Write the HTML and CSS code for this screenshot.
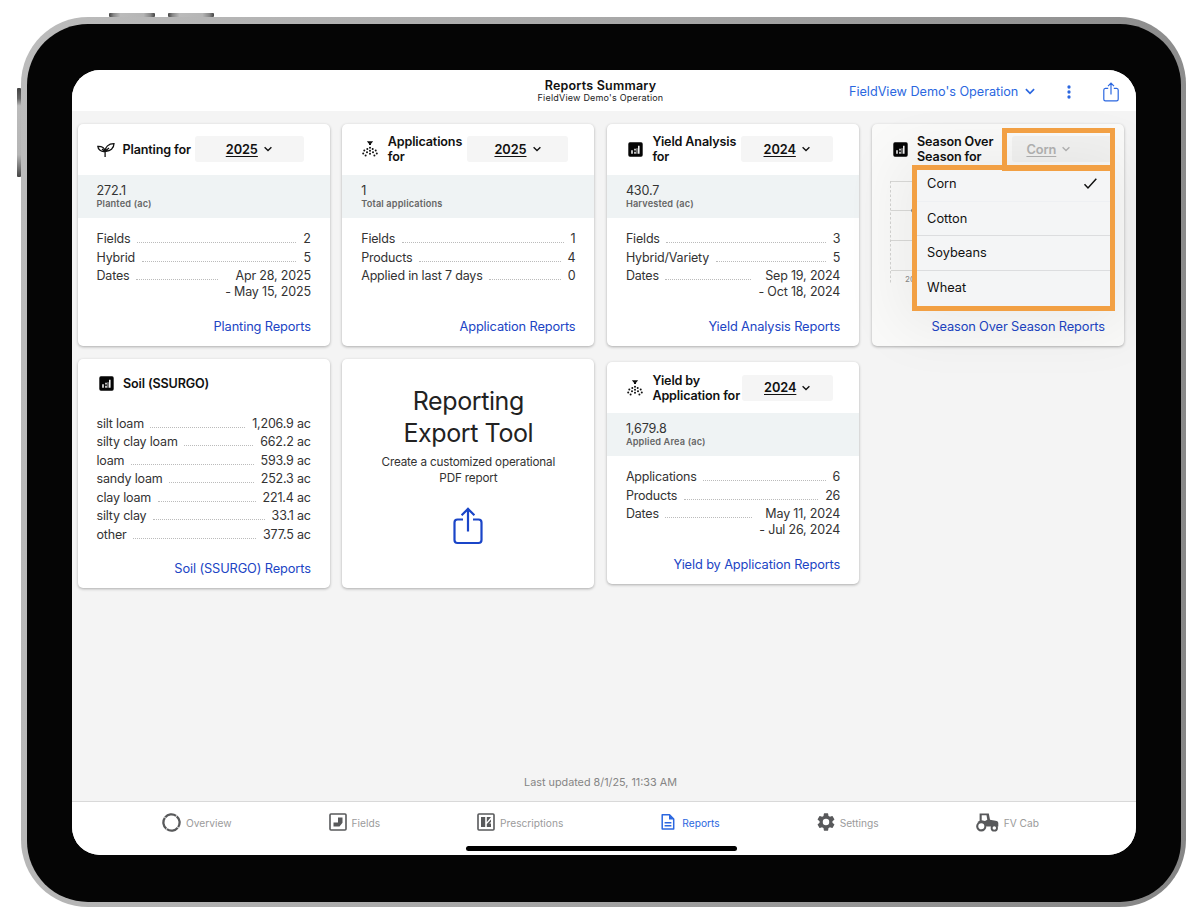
FILE: index.html
```
<!DOCTYPE html>
<html lang="en">
<head>
<meta charset="utf-8">
<title>Reports Summary</title>
<link rel="stylesheet" href="styles.css">
</head>
<body>
<svg class="defs" width="0" height="0" aria-hidden="true">
  <symbol id="chart" viewBox="0 0 15 15"><rect x=".3" y=".3" width="14.4" height="14.4" rx="1.6" fill="#050505"/><path d="M4 8.2v3.6M7 9.7v2.1M7 6.8v1.6M10.8 3.7v8.1" stroke="#fff" stroke-width="1.5"/><path d="M9 6.2v5.6" stroke="#fff" stroke-width=".8"/></symbol>
  <symbol id="spray" viewBox="0 0 16 16"><path d="M4.900.3h6.200L9.400 2.500H6.600zM7 2h2v1.900H7z" fill="#111"/><g fill="#111"><circle cx="8" cy="6.700" r="1"/><circle cx="5.300" cy="8" r="1"/><circle cx="10.700" cy="8" r="1"/><circle cx="8" cy="9.700" r="1"/><circle cx="2.300" cy="9.600" r="1"/><circle cx="13.700" cy="9.600" r="1"/><circle cx="5" cy="11.300" r="1"/><circle cx="11" cy="11.300" r="1"/><circle cx="8" cy="12.700" r="1"/><circle cx="1.200" cy="12.500" r="1"/><circle cx="14.800" cy="12.500" r="1"/><circle cx="3.600" cy="14.600" r="1"/><circle cx="12.400" cy="14.600" r="1"/></g></symbol>
  <symbol id="chev" viewBox="0 0 10 8"><path d="M1.6 2.3 5 5.6l3.4-3.3" fill="none" stroke="currentColor" stroke-width="1.35"/></symbol>
</svg>
<div class="device">
  <i class="key key-top key-a"></i><i class="key key-top key-b"></i><i class="key key-side"></i>
  <div class="bezel">
    <div class="screen">
      <header class="topbar">
        <div class="heading"><h1>Reports Summary</h1><p>FieldView Demo's Operation</p></div>
        <div class="tools">
          <span class="operation">FieldView Demo's Operation</span>
          <svg class="op-chev" width="12" height="9" viewBox="0 0 12 9"><path d="M1.9 2.2 6 6.3l4.1-4.1" fill="none" stroke="currentColor" stroke-width="1.7"/></svg>
          <svg class="more" width="6" height="14" viewBox="0 0 6 14" fill="currentColor"><circle cx="3" cy="2" r="1.65"/><circle cx="3" cy="7" r="1.65"/><circle cx="3" cy="12" r="1.65"/></svg>
          <svg class="share" width="16" height="20" viewBox="0 0 16 20" fill="none" stroke="currentColor" stroke-width="1.2"><path d="M5.2 6.3H2.4A1.7 1.7 0 0 0 .8 8v9.2a1.7 1.7 0 0 0 1.6 1.7h11.2a1.7 1.7 0 0 0 1.6-1.7V8a1.7 1.7 0 0 0-1.6-1.7h-2.8M8 12.5V1.3M5 4.2 8 1.2l3 3"/></svg>
        </div>
      </header>

      <main class="grid">
        <section class="card">
          <div class="card-head">
            <svg class="icon" width="18" height="16" viewBox="0 0 18 16" fill="none" stroke="#111" stroke-width="1.3"><path d="M8.100 15V9.200M8.100 9.200C8 5.200 11.500 1.500 17 1.600 17 6.300 13.300 9.700 8.100 9.200zM8.100 9.300 12 6M8.100 9.400C8 6 5 4.100.8 4.300 1 7.600 4 10.100 8.100 9.400zM7.900 9.300 5 7.100"/></svg>
            <h2>Planting for</h2>
            <span class="select w109"><u>2025</u><svg width="10" height="8"><use href="#chev"/></svg></span>
          </div>
          <div class="stat"><b>272.1</b><small>Planted (ac)</small></div>
          <dl>
            <div><dt>Fields</dt><i></i><dd>2</dd></div>
            <div><dt>Hybrid</dt><i></i><dd>5</dd></div>
            <div><dt>Dates</dt><i></i><dd>Apr 28, 2025<br>- May 15, 2025</dd></div>
          </dl>
          <a>Planting Reports</a>
        </section>

        <section class="card">
          <div class="card-head">
            <svg class="icon" width="16" height="16"><use href="#spray"/></svg>
            <h2>Applications<br>for</h2>
            <span class="select w101"><u>2025</u><svg width="10" height="8"><use href="#chev"/></svg></span>
          </div>
          <div class="stat"><b>1</b><small>Total applications</small></div>
          <dl>
            <div><dt>Fields</dt><i></i><dd>1</dd></div>
            <div><dt>Products</dt><i></i><dd>4</dd></div>
            <div><dt>Applied in last 7 days</dt><i></i><dd>0</dd></div>
          </dl>
          <a>Application Reports</a>
        </section>

        <section class="card">
          <div class="card-head">
            <svg class="icon" width="15" height="15"><use href="#chart"/></svg>
            <h2>Yield Analysis<br>for</h2>
            <span class="select w92"><u>2024</u><svg width="10" height="8"><use href="#chev"/></svg></span>
          </div>
          <div class="stat"><b>430.7</b><small>Harvested (ac)</small></div>
          <dl>
            <div><dt>Fields</dt><i></i><dd>3</dd></div>
            <div><dt>Hybrid/Variety</dt><i></i><dd>5</dd></div>
            <div><dt>Dates</dt><i></i><dd>Sep 19, 2024<br>- Oct 18, 2024</dd></div>
          </dl>
          <a>Yield Analysis Reports</a>
        </section>

        <section class="card season">
          <div class="card-head">
            <svg class="icon" width="15" height="15"><use href="#chart"/></svg>
            <h2>Season Over<br>Season for</h2>
            <span class="select muted"><u>Corn</u><svg width="10" height="8"><use href="#chev"/></svg></span>
          </div>
          <svg class="plot" width="60" height="110" viewBox="0 0 60 110"><path d="M1 6.500h59M1 35.500h59M1 65.500h59M1 95.500h59" stroke="#dadad8"/><path d="M.500 6v102" stroke="#d3d3d1" stroke-dasharray="2.500 2"/><circle cx="23" cy="35.500" r="2" fill="#888"/><text x="15" y="107">2022</text></svg>
          <a>Season Over Season Reports</a>
          <ul class="menu">
            <li>Corn<svg width="15" height="13" viewBox="0 0 15 13"><path d="M1.500 7.200 5 11 13.300 1.800" fill="none" stroke="#111" stroke-width="1.500"/></svg></li>
            <li>Cotton</li><li>Soybeans</li><li>Wheat</li>
          </ul>
          <div class="mark"></div>
        </section>

        <section class="card soil">
          <div class="card-head">
            <svg class="icon" width="15" height="15"><use href="#chart"/></svg>
            <h2>Soil (SSURGO)</h2>
          </div>
          <dl>
            <div><dt>silt loam</dt><i></i><dd>1,206.9 ac</dd></div>
            <div><dt>silty clay loam</dt><i></i><dd>662.2 ac</dd></div>
            <div><dt>loam</dt><i></i><dd>593.9 ac</dd></div>
            <div><dt>sandy loam</dt><i></i><dd>252.3 ac</dd></div>
            <div><dt>clay loam</dt><i></i><dd>221.4 ac</dd></div>
            <div><dt>silty clay</dt><i></i><dd>33.1 ac</dd></div>
            <div><dt>other</dt><i></i><dd>377.5 ac</dd></div>
          </dl>
          <a>Soil (SSURGO) Reports</a>
        </section>

        <section class="card export">
          <h2>Reporting<br>Export Tool</h2>
          <p>Create a customized operational<br>PDF report</p>
          <svg width="30" height="38" viewBox="0 0 30 38" fill="none" stroke="#1a45c8" stroke-width="2.200"><path d="M10 12.500H4.500A3 3 0 0 0 1.500 15.500v17.500a3 3 0 0 0 3 3h21a3 3 0 0 0 3-3V15.500a3 3 0 0 0-3-3H20M15 24.500V2M8.600 8.300 15 1.900l6.400 6.400"/></svg>
        </section>

        <section class="card">
          <div class="card-head">
            <svg class="icon" width="16" height="16"><use href="#spray"/></svg>
            <h2>Yield by<br>Application for</h2>
            <span class="select w91"><u>2024</u><svg width="10" height="8"><use href="#chev"/></svg></span>
          </div>
          <div class="stat"><b>1,679.8</b><small>Applied Area (ac)</small></div>
          <dl>
            <div><dt>Applications</dt><i></i><dd>6</dd></div>
            <div><dt>Products</dt><i></i><dd>26</dd></div>
            <div><dt>Dates</dt><i></i><dd>May 11, 2024<br>- Jul 26, 2024</dd></div>
          </dl>
          <a>Yield by Application Reports</a>
        </section>
      </main>

      <p class="updated">Last updated 8/1/25, 11:33 AM</p>

      <nav class="tabs">
        <span class="tab"><svg width="19" height="19" viewBox="0 0 19 19" fill="none" stroke="#58595b" stroke-width="2.300"><circle cx="9.500" cy="9.500" r="8.100" pathLength="100" stroke-dasharray="23.500 1.500" transform="rotate(-50 9.500 9.500)"/></svg>Overview</span>
        <span class="tab"><svg width="18" height="18" viewBox="0 0 18 18"><rect x="1" y="1" width="16" height="16" rx="1" fill="none" stroke="#58595b" stroke-width="1.600"/><path d="M9 4.500h4.500v5.300l-3 3.700H4.500V9.500H9z" fill="#58595b"/></svg>Fields</span>
        <span class="tab"><svg width="18" height="18" viewBox="0 0 18 18"><rect x="1" y="1" width="16" height="16" rx="1" fill="none" stroke="#58595b" stroke-width="1.600"/><path d="M4 4h4.200v10H4zM9.800 4h4.200L9.800 9.200zM14 6.500V9L12.200 10.500H14V14H9.800V11z" fill="#58595b"/></svg>Prescriptions</span>
        <span class="tab active"><svg width="16" height="18" viewBox="0 0 16 18"><path d="M2.200 1.800h7.300l4.200 4.200v10.100H2.200z" fill="none" stroke="currentColor" stroke-width="1.500" stroke-linejoin="round"/><path d="M9 1.500v5h5zM4.600 9h6.800v1.400H4.600zM4.600 12h6.800v1.400H4.600z" fill="currentColor"/></svg>Reports</span>
        <span class="tab"><svg width="18" height="18" viewBox="2.200 2 19.600 20"><path fill="#58595b" d="M19.140 12.940c.04-.3.060-.61.060-.94s-.02-.64-.07-.94l2.030-1.580a.49.490 0 0 0 .12-.61l-1.920-3.320a.49.490 0 0 0-.59-.22l-2.390.96a7 7 0 0 0-1.620-.94l-.36-2.540A.48.480 0 0 0 13.920 2.400h-3.840a.48.480 0 0 0-.47.410l-.36 2.540a7.300 7.300 0 0 0-1.620.94l-2.390-.96a.48.480 0 0 0-.59.220L2.740 8.870a.47.470 0 0 0 .12.610l2.030 1.580c-.05.300-.09.630-.09.940s.02.640.07.940l-2.030 1.580a.49.490 0 0 0-.12.610l1.920 3.320c.12.220.37.290.59.220l2.390-.96c.5.380 1.030.7 1.620.94l.36 2.540c.05.240.24.410.48.410h3.840c.24 0 .44-.17.470-.41l.36-2.540a7.300 7.300 0 0 0 1.620-.94l2.390.96c.22.080.47 0 .59-.22l1.920-3.320a.47.470 0 0 0-.12-.61zM12 15.600a3.600 3.600 0 1 1 0-7.200 3.600 3.600 0 0 1 0 7.200z"/></svg>Settings</span>
        <span class="tab"><svg width="23" height="19" viewBox="0 0 23 19"><path fill="#58595b" fill-rule="evenodd" d="M3.600.5h9.200l1.200 6.200 6.700 1.300a2 2 0 0 1 1.600 2v3.500H11L2 9.500 1.500 9l2.100-1.200zM5.700 2.300v5l3.300.8 2.300-1.300-.8-4.500z"/><circle cx="5.300" cy="13.300" r="4.100" fill="#fff" stroke="#58595b" stroke-width="2.100"/><circle cx="18.300" cy="14.900" r="2.700" fill="#fff" stroke="#58595b" stroke-width="1.900"/></svg>FV Cab</span>
      </nav>
      <div class="home"></div>
    </div>
  </div>
</div>
</body>
</html>
```
FILE: styles.css
```
* { box-sizing: border-box; }
body { margin: 0; background: #fff; font-family: Inter, "Liberation Sans", sans-serif; color: #111; width: 1200px; height: 922px; overflow: hidden; padding: 17px 0 0 21px; }
h1, h2, p, dl, dd, ul { margin: 0; padding: 0; }
.defs { position: absolute; }
.device { position: relative; width: 1165px; height: 890px; padding: 6.500px 5px 5px 6px; border-radius: 67px; background: linear-gradient(100deg, #bcbcbc, #a6a6a6 50%, #858585); }
.key { position: absolute; background: linear-gradient(90deg, #444, #888 10%, #bbb 25%, #b5b5b5 75%, #888 90%, #444); border-radius: 1px; }
.key-top { top: -4px; width: 46.500px; height: 4px; }
.key-a { left: 87.500px; }
.key-b { left: 146.500px; }
.key-side { left: -4px; top: 71px; width: 4px; height: 89px; background: linear-gradient(#444, #666 12%, #bbb 20%, #b5b5b5 75%, #444); }
.bezel { height: 100%; padding: 46.500px 45px 47px; border-radius: 61px; background: #050505; }
.screen { position: relative; height: 785px; display: flex; flex-direction: column; overflow: hidden; border-radius: 28px; background: #f4f4f4; }
.topbar { height: 41px; flex: none; display: grid; grid-template-columns: 381px 295px 1fr; background: #fff; }
.heading { grid-column: 2; text-align: center; padding-top: 8.500px; }
.heading h1 { font-size: 12.500px; line-height: 14px; font-weight: 600; letter-spacing: .22px; }
.heading p { font-size: 9px; line-height: 11px; color: #222; letter-spacing: .2px; margin-top: -.5px; }
.tools { display: flex; align-items: center; color: #2b67e0; padding: 2px 17px 0 101px; }
.operation { font-size: 12.700px; letter-spacing: -.03px; white-space: nowrap; }
.op-chev { margin-left: 6px; flex: none; }
.more { margin-left: auto; margin-right: 31px; }

.grid { display: grid; grid-template-columns: repeat(4, 252.300px); column-gap: 12.400px; row-gap: 12.500px; padding: 13px 0 0 5.500px; align-items: center; flex: none; }
.card { background: #fff; border-radius: 5px; box-shadow: 0 1px 3px rgba(0,0,0,.3); height: 222px; display: flex; flex-direction: column; position: relative; }
.card-head { height: 50.500px; flex: none; display: flex; align-items: center; padding: 0 26px 0 19px; }
.icon { flex: none; margin-left: 1px; }
.card-head h2 { font-size: 12.600px; line-height: 15px; font-weight: 600; white-space: nowrap; letter-spacing: -.14px; }
.icon[width="18"] { margin: 1px 8px 0 0; }
.icon[width="16"] { margin-right: 9.500px; }
.icon[width="15"] { margin-left: 2px; margin-right: 9.500px; }
.select { margin-left: auto; flex: none; height: 26px; border-radius: 3px; background: #f5f5f5; display: flex; justify-content: center; align-items: center; gap: 5px; font-size: 12.800px; font-weight: 600; }
.select u { text-underline-offset: 2px; text-decoration-thickness: 1px; letter-spacing: -.1px; }
.w109 { width: 109px; } .w101 { width: 101px; } .w92 { width: 92px; } .w91 { width: 91px; }
.stat { height: 43.500px; flex: none; background: #eff3f4; padding: 8px 19px 0; color: #333; }
.stat b { display: block; font-weight: 400; font-size: 12.600px; line-height: 15.500px; letter-spacing: -.15px; }
.stat small { display: block; font-size: 9.200px; line-height: 11px; font-weight: 600; color: #666; letter-spacing: .16px; }
dl { padding: 13px 19px 0; font-size: 12.500px; color: #333; letter-spacing: -.18px; }
dl div { display: flex; line-height: 15.500px; margin-bottom: 3px; }
dl div > i { flex: 1; height: 12px; margin: 0 7px 0 6.500px; border-bottom: 1px dotted #bbb; }
dt { white-space: nowrap; }
dd { text-align: right; white-space: nowrap; }
.card > a { margin: auto 19px 11px auto; font-size: 12.800px; letter-spacing: -.12px; line-height: 17px; color: #2044c4; white-space: nowrap; }
.soil, .export { height: 229.500px; }
.soil dl { padding-top: 6.500px; }
.export { align-items: center; text-align: center; color: #222; padding-top: 26px; }
.export h2 { font-size: 25px; line-height: 32px; font-weight: 400; letter-spacing: -.4px; }
.export p { font-size: 11.700px; line-height: 16px; letter-spacing: -.17px; margin: 5px 0 21px; color: #333; }

.season { background: #fafaf9; }
.season .select { background: #f2f2f1; }
.season .muted { width: 100px; color: #b2b2b2; padding-right: 26px; margin-right: -14px; }
.plot { margin: 0 0 0 18px; flex: none; }
.plot text { font-size: 8px; fill: #888; }
.menu { position: absolute; z-index: 2; left: 40px; top: 41px; width: 203px; height: 145.500px; border: 5.500px solid #f2a044; background: #f4f5f6; list-style: none; box-shadow: 0 4px 60px 15px rgba(0,0,0,.06); }
.menu li { height: 34.500px; display: flex; align-items: center; justify-content: space-between; padding: 0 12px 0 10.500px; font-size: 12.800px; border-bottom: 1px solid #dcdddf; }
.menu li:first-child { height: 31.500px; padding-bottom: 3px; border-color: #eef0f3; }
.menu li:last-child { border: 0; }
.mark { position: absolute; z-index: 3; left: 130.500px; top: 3.500px; width: 112.500px; height: 43px; border: 5.500px solid #f2a044; }

.updated { margin-top: auto; text-align: center; font-size: 10.800px; line-height: 14px; padding: 0 7px 11px 0; color: #858585; }
.tabs { height: 54px; flex: none; background: #fff; border-top: 1px solid #d9d9d9; display: flex; justify-content: space-between; align-items: flex-start; padding: 10.500px 97px 0 90px; }
.tab { display: flex; align-items: center; height: 20px; gap: 5px; font-size: 10.200px; color: #9b9b9b; white-space: nowrap; }
.tab svg { margin-top: -1px; }
.tab.active { color: #2b67e0; gap: 6px; }
.home { position: absolute; left: 393.500px; top: 776px; width: 271px; height: 4.500px; border-radius: 3px; background: #000; }
```
